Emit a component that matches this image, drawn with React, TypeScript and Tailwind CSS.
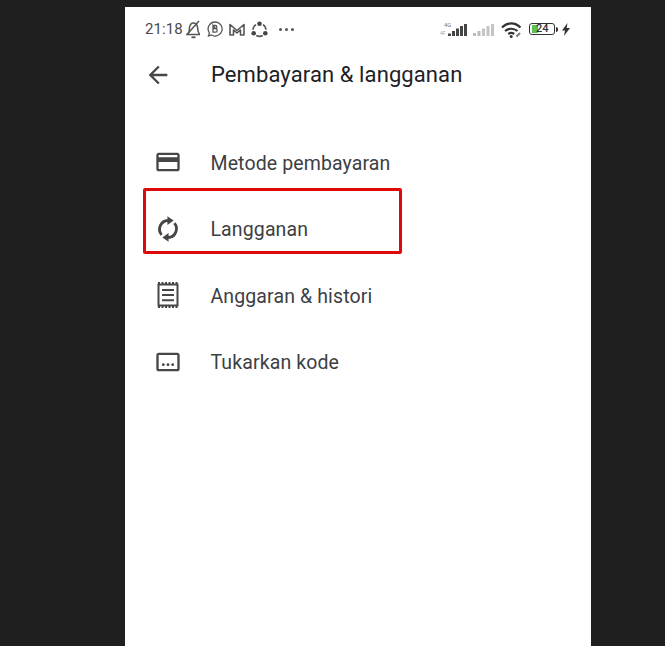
import React from "react";

const Card = () => (
  <svg width="28" height="28" viewBox="0 0 24 24" fill="#444746"><path d="M20 4H4c-1.100 0-2 .9-2 2v12c0 1.100.9 2 2 2h16c1.100 0 2-.9 2-2V6c0-1.100-.9-2-2-2zm0 14H4v-6h16v6zm0-10H4V6h16v2z" /></svg>
);
const Sync = () => (
  <svg width="28" height="28" viewBox="0 0 24 24" fill="#444746">
    <path d="M6.500 17A7.500 7.500 0 0 1 12 4.700" fill="none" stroke="#444746" strokeWidth="2.400" />
    <path d="M17.500 7A7.500 7.500 0 0 1 12 19.300" fill="none" stroke="#444746" strokeWidth="2.400" />
    <path d="M11.500 1 16.800 4.800 11.500 8.500z" />
    <path d="M12.500 23 7.200 19.200 12.500 15.500z" />
  </svg>
);
const Receipt = () => (
  <svg width="24" height="28" viewBox="0 0 24 28" fill="none" stroke="#444746">
    <path d="M2 2h20M2 26h20" strokeWidth="2" strokeDasharray="2 1.500" />
    <path d="M2.500 3.500h19v21h-19z" strokeWidth="2" />
    <path d="M6 9h12M6 14h12M6 19.200h12" strokeWidth="2" />
  </svg>
);
const Redeem = () => (
  <svg width="28" height="28" viewBox="0 0 24 24" fill="#444746"><path d="M20 4H4c-1.100 0-2 .9-2 2v12c0 1.100.9 2 2 2h16c1.100 0 2-.9 2-2V6c0-1.100-.9-2-2-2zm0 14H4V6h16v12z" /><circle cx="8" cy="14.300" r="1.200" /><circle cx="12" cy="14.300" r="1.200" /><circle cx="16" cy="14.300" r="1.200" /></svg>
);

const StatusLeft = () => (
  <div className="flex items-center">
    <span className="text-[15px] leading-none text-[#4a4a4a] tracking-[0.1px]">21:18</span>
    <svg className="ml-[2px]" width="17" height="19" viewBox="0 0 17 19" fill="none" stroke="#555" strokeWidth="1.500">
      <path d="M1.500 14.500h13.500M3 14c1.500-2 1.200-4 1.500-6.500C5 4.500 6.500 3 8.500 3s3.500 1.500 4 4c.4 2.500 0 5 2 7" />
      <path d="M1.500 15 14 1" />
      <path d="M6.500 17.300h4" strokeWidth="1.800" />
    </svg>
    <svg className="ml-[5px]" width="16" height="16" viewBox="0 0 16 16" fill="none" stroke="#555" strokeWidth="1.300">
      <path d="M8 1a7 7 0 1 1-3.500 13L1.500 15l.9-3A7 7 0 0 1 8 1z" />
      <path d="M6 4.500h2.500c1.800 0 1.800 3.200 0 3.200H6m2.500 0c2.200 0 2.200 3.500 0 3.500H6V4.500z" />
    </svg>
    <svg className="ml-[6px]" width="16" height="13" viewBox="0 0 16 13" fill="none" stroke="#555" strokeWidth="1.600" strokeLinejoin="round">
      <path d="M1 12V1.500L8 7.500l7-6V12h-3.500V7L8 10 4.500 7v5z" />
    </svg>
    <svg className="ml-[6px]" width="17" height="17" viewBox="0 0 17 17" fill="none">
      <path d="M5 3.600A6.500 6.500 0 0 0 2 8.700M12 3.600A6.500 6.500 0 0 1 15 8.700M5.300 14.500a6.500 6.500 0 0 0 6.400 0" stroke="#555" strokeWidth="1.600" />
      <circle cx="8.500" cy="2.700" r="2.300" fill="#444" />
      <circle cx="2.700" cy="12.300" r="2.300" fill="#444" />
      <circle cx="14.300" cy="12.300" r="2.300" fill="#444" />
    </svg>
    <div className="ml-[11px] flex gap-[3px]">
      <span className="h-[3px] w-[3px] rounded-full bg-[#555]" />
      <span className="h-[3px] w-[3px] rounded-full bg-[#555]" />
      <span className="h-[3px] w-[3px] rounded-full bg-[#555]" />
    </div>
  </div>
);

const StatusRight = () => (
  <div className="flex items-center">
    <svg width="29" height="17" viewBox="0 0 29 17">
      <text x="5" y="6" fontSize="6" fill="#777" fontFamily="Roboto, sans-serif">4G</text>
      <text x="1" y="14" fontSize="5" fill="#aaa" fontFamily="Roboto, sans-serif">4F</text>
      <rect x="9" y="12.500" width="3" height="2.500" fill="#444" />
      <rect x="13" y="10" width="3" height="5" fill="#444" />
      <rect x="17" y="7.500" width="3" height="7.500" fill="#444" />
      <rect x="21" y="5" width="3" height="10" fill="#444" />
      <rect x="25" y="3" width="3" height="12" fill="#444" />
    </svg>
    <svg className="ml-[5px]" width="22" height="15" viewBox="0 0 22 15">
      <rect x="0" y="11" width="3" height="3" fill="#bbb" />
      <rect x="4.500" y="9" width="3" height="5" fill="#bbb" />
      <rect x="9" y="6.500" width="3" height="7.500" fill="#c4c4c4" />
      <rect x="13.500" y="4" width="3" height="10" fill="#c4c4c4" />
      <rect x="18" y="2" width="3" height="12" fill="#c4c4c4" />
    </svg>
    <svg className="ml-[6px]" width="22" height="17" viewBox="0 0 22 17" fill="none" stroke="#333" strokeWidth="2.200">
      <path d="M1 6.500c5.500-5.500 13-5.500 18.500 0M4 10c3.500-3 9-3 12.500 0M7.200 13c1.800-1.300 4.200-1.300 6 0" />
      <circle cx="10.200" cy="15.400" r="1.500" fill="#333" stroke="none" />
      <path d="M15.500 15.500l3.500-3.500" stroke="#777" strokeWidth="2" />
    </svg>
    <div className="ml-[6px] relative flex h-[12px] w-[26px] items-center rounded-[3px] border border-[#333] bg-white">
      <span className="ml-[2px] h-[8px] w-[6px] bg-[#5cc24a]" />
      <span className="absolute left-[6px] top-[-1px] text-[11px] leading-[12px] font-medium text-[#333]">24</span>
    </div>
    <span className="ml-[1px] h-[5px] w-[2px] rounded-r bg-[#333]" />
    <svg className="ml-[3px]" width="10" height="13" viewBox="0 0 10 13" fill="#333">
      <path d="M6.500 0 1 7.500h3L3 13l6-8H5.700z" />
    </svg>
  </div>
);

const Row = ({ icon, label }: { icon: React.ReactNode; label: string }) => (
  <div className="flex h-[66.600px] items-center">
    <div className="ml-[29px] flex w-[28px] justify-center">{icon}</div>
    <span className="ml-[28.500px] pt-[2px] text-[19.500px] text-[#3c4043] tracking-[0.12px]">{label}</span>
  </div>
);

export default function App() {
  return (
    <div className="h-[646px] w-[665px] overflow-hidden bg-[#1f1f1f] pl-[125px] pt-[7px] font-['Roboto',sans-serif]">
      <div className="relative h-[639px] w-[466px] bg-white">
        <div className="flex h-[44px] items-center justify-between pl-[20px] pr-[20px]">
          <StatusLeft />
          <StatusRight />
        </div>
        <div className="mt-[1px] flex h-[46px] items-center">
          <svg className="ml-[19px]" width="28" height="28" viewBox="0 0 24 24" fill="#444746"><path d="M20 11H7.830l5.590-5.590L12 4l-8 8 8 8 1.410-1.410L7.830 13H20v-2z" /></svg>
          <h1 className="ml-[39px] pb-[2px] text-[22px] font-normal text-[#202124] tracking-[0.1px]">Pembayaran &amp; langganan</h1>
        </div>
        <div className="mt-[31px]">
          <Row icon={<Card />} label="Metode pembayaran" />
          <Row icon={<Sync />} label="Langganan" />
          <Row icon={<Receipt />} label="Anggaran & histori" />
          <Row icon={<Redeem />} label="Tukarkan kode" />
        </div>
        <div className="absolute left-[18px] top-[181px] h-[66px] w-[259px] rounded-[2px] border-[3px] border-[#dc0a0a]" />
      </div>
    </div>
  );
}
